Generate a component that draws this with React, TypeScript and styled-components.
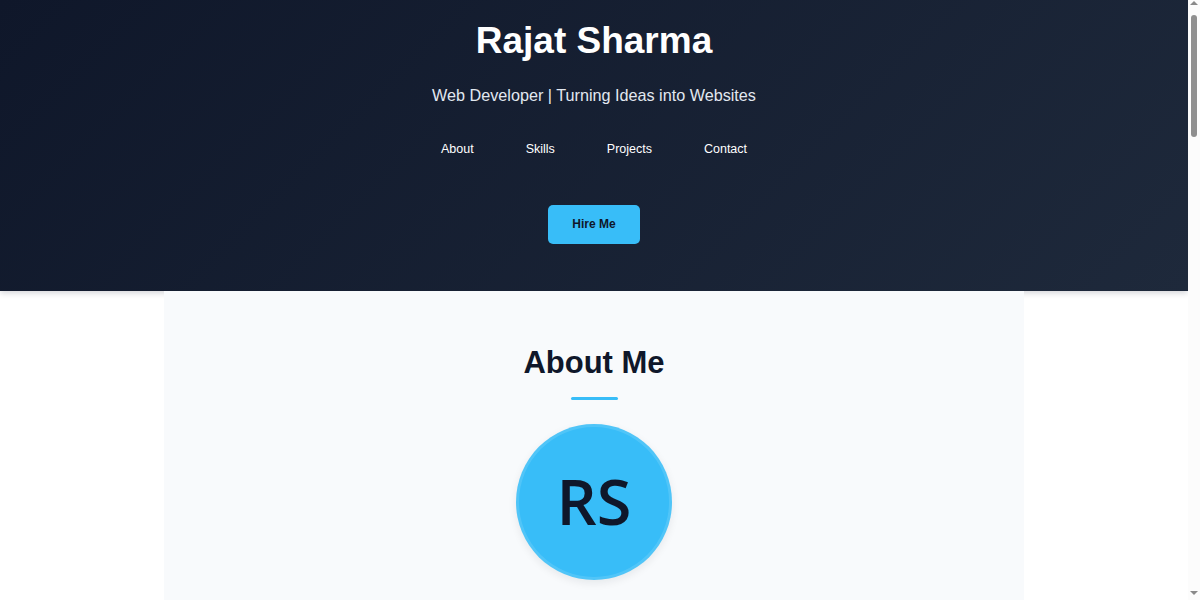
import React from 'react'
import styled, { createGlobalStyle } from 'styled-components'

const GlobalStyle = createGlobalStyle`
  html, body {
    margin: 0;
    padding: 0;
    background: #ffffff;
    font-family: 'Liberation Sans', Arial, sans-serif;
  }

  * {
    box-sizing: border-box;
  }
`

const Page = styled.div`
  margin-right: 12px;
`

// the window's scroll bar, drawn over the right edge
const ScrollTrack = styled.div`
  position: fixed;
  top: 0;
  right: 0;
  width: 12px;
  height: 100vh;
  background: #fcfcfc;
`

const ScrollThumb = styled.div`
  position: absolute;
  top: 15px;
  left: 3px;
  width: 6px;
  height: 122px;
  border-radius: 3px;
  background: #8f8f8f;
`

const Arrow = styled.div<{ $down?: boolean }>`
  position: absolute;
  left: 2px;
  width: 0;
  height: 0;
  border-left: 4px solid transparent;
  border-right: 4px solid transparent;
  ${({ $down }) =>
    $down
      ? 'bottom: 5px; border-top: 4px solid #8a8a8a;'
      : 'top: 1px; border-bottom: 4px solid #8a8a8a;'}
`

const Header = styled.header`
  background: linear-gradient(135deg, #0f172a 0%, #1e293b 100%);
  color: #ffffff;
  text-align: center;
  padding: 19px 0 47px;
  box-shadow: 0 2px 6px rgba(15, 23, 42, 0.18);
`

const Name = styled.h1`
  margin: 0;
  font-size: 37px;
  line-height: 44px;
  font-weight: 700;
`

const Tagline = styled.p`
  margin: 22px 0 0;
  font-size: 16.2px;
  line-height: 20px;
  color: #e2e8f0;
`

const Nav = styled.nav`
  display: flex;
  justify-content: center;
  gap: 52px;
  margin-top: 36px;
`

const NavLink = styled.a`
  color: #ffffff;
  text-decoration: none;
  font-size: 12.5px;
  line-height: 16px;
`

const HireButton = styled.a`
  display: inline-block;
  margin-top: 48px;
  padding: 12px 24px;
  background: #38bdf8;
  color: #0f172a;
  border-radius: 5px;
  font-size: 12px;
  line-height: 15px;
  font-weight: 700;
  text-decoration: none;
`

const Main = styled.main`
  width: 860px;
  margin: 0 auto;
  background: #f8fafc;
`

const Section = styled.section`
  padding: 54px 40px 48px;
  text-align: center;
`

const SectionTitle = styled.h2`
  margin: 0;
  font-size: 31px;
  line-height: 36px;
  font-weight: 700;
  color: #0f172a;
`

const Underline = styled.div`
  width: 47px;
  height: 3px;
  margin: 16px auto 0;
  border-radius: 2px;
  background: #38bdf8;
`

const Avatar = styled.div`
  width: 156px;
  height: 156px;
  margin: 24px auto 0;
  border-radius: 50%;
  border: 3px solid rgba(255, 255, 255, 0.12);
  background: #38bdf8;
  box-shadow: 0 3px 8px rgba(15, 23, 42, 0.08);
  display: flex;
  align-items: center;
  justify-content: center;
  padding-bottom: 4px;
  color: #0f172a;
  font-family: 'Open Sans', 'Noto Sans', sans-serif;
  font-size: 63px;
  font-weight: 600;
`

const Body = styled.p`
  max-width: 640px;
  margin: 28px auto 0;
  font-size: 15px;
  line-height: 1.7;
  color: #334155;
`

const CardGrid = styled.div`
  display: grid;
  grid-template-columns: repeat(3, 1fr);
  gap: 20px;
  margin-top: 36px;
`

const Card = styled.div`
  background: #ffffff;
  border-radius: 8px;
  padding: 28px 20px;
  box-shadow: 0 2px 8px rgba(15, 23, 42, 0.08);
  color: #0f172a;
  font-size: 15px;
`

const CardTitle = styled.h3`
  margin: 0 0 10px;
  font-size: 18px;
  color: #0f172a;
`

const ContactLine = styled.p`
  margin: 10px 0 0;
  font-size: 15px;
  color: #334155;
`

const Footer = styled.footer`
  padding: 24px 0;
  text-align: center;
  background: #0f172a;
  color: #cbd5e1;
  font-size: 13px;
`

const skills = ['HTML', 'CSS', 'JavaScript', 'React', 'Node.js', 'Git']

const projects = [
  { name: 'Portfolio Website', text: 'A responsive personal site built with HTML and CSS.' },
  { name: 'Todo App', text: 'A simple task manager using JavaScript and local storage.' },
  { name: 'Weather App', text: 'Shows the current weather for any city.' },
]

export default function App() {
  return (
    <>
      <GlobalStyle />
      <Page>
        <Header>
          <Name>Rajat Sharma</Name>
          <Tagline>Web Developer | Turning Ideas into Websites</Tagline>
          <Nav>
            <NavLink href="#about">About</NavLink>
            <NavLink href="#skills">Skills</NavLink>
            <NavLink href="#projects">Projects</NavLink>
            <NavLink href="#contact">Contact</NavLink>
          </Nav>
          <HireButton href="#contact">Hire Me</HireButton>
        </Header>

        <Main>
          <Section id="about">
            <SectionTitle>About Me</SectionTitle>
            <Underline />
            <Avatar>RS</Avatar>
            <Body>
              Hi, I'm Rajat Sharma, a web developer who enjoys turning ideas into clean,
              fast and responsive websites. I love learning new tools and building things
              that people find useful.
            </Body>
          </Section>

          <Section id="skills">
            <SectionTitle>Skills</SectionTitle>
            <Underline />
            <CardGrid>
              {skills.map((s) => (
                <Card key={s}>{s}</Card>
              ))}
            </CardGrid>
          </Section>

          <Section id="projects">
            <SectionTitle>Projects</SectionTitle>
            <Underline />
            <CardGrid>
              {projects.map((p) => (
                <Card key={p.name}>
                  <CardTitle>{p.name}</CardTitle>
                  {p.text}
                </Card>
              ))}
            </CardGrid>
          </Section>

          <Section id="contact">
            <SectionTitle>Contact</SectionTitle>
            <Underline />
            <ContactLine>Email: rajat.sharma@example.com</ContactLine>
            <ContactLine>Phone: +91 98765 43210</ContactLine>
            <Body>Feel free to reach out for freelance work or collaboration.</Body>
          </Section>
        </Main>

        <Footer>© 2024 Rajat Sharma. All rights reserved.</Footer>
      </Page>

      <ScrollTrack>
        <Arrow />
        <ScrollThumb />
        <Arrow $down />
      </ScrollTrack>
    </>
  )
}
